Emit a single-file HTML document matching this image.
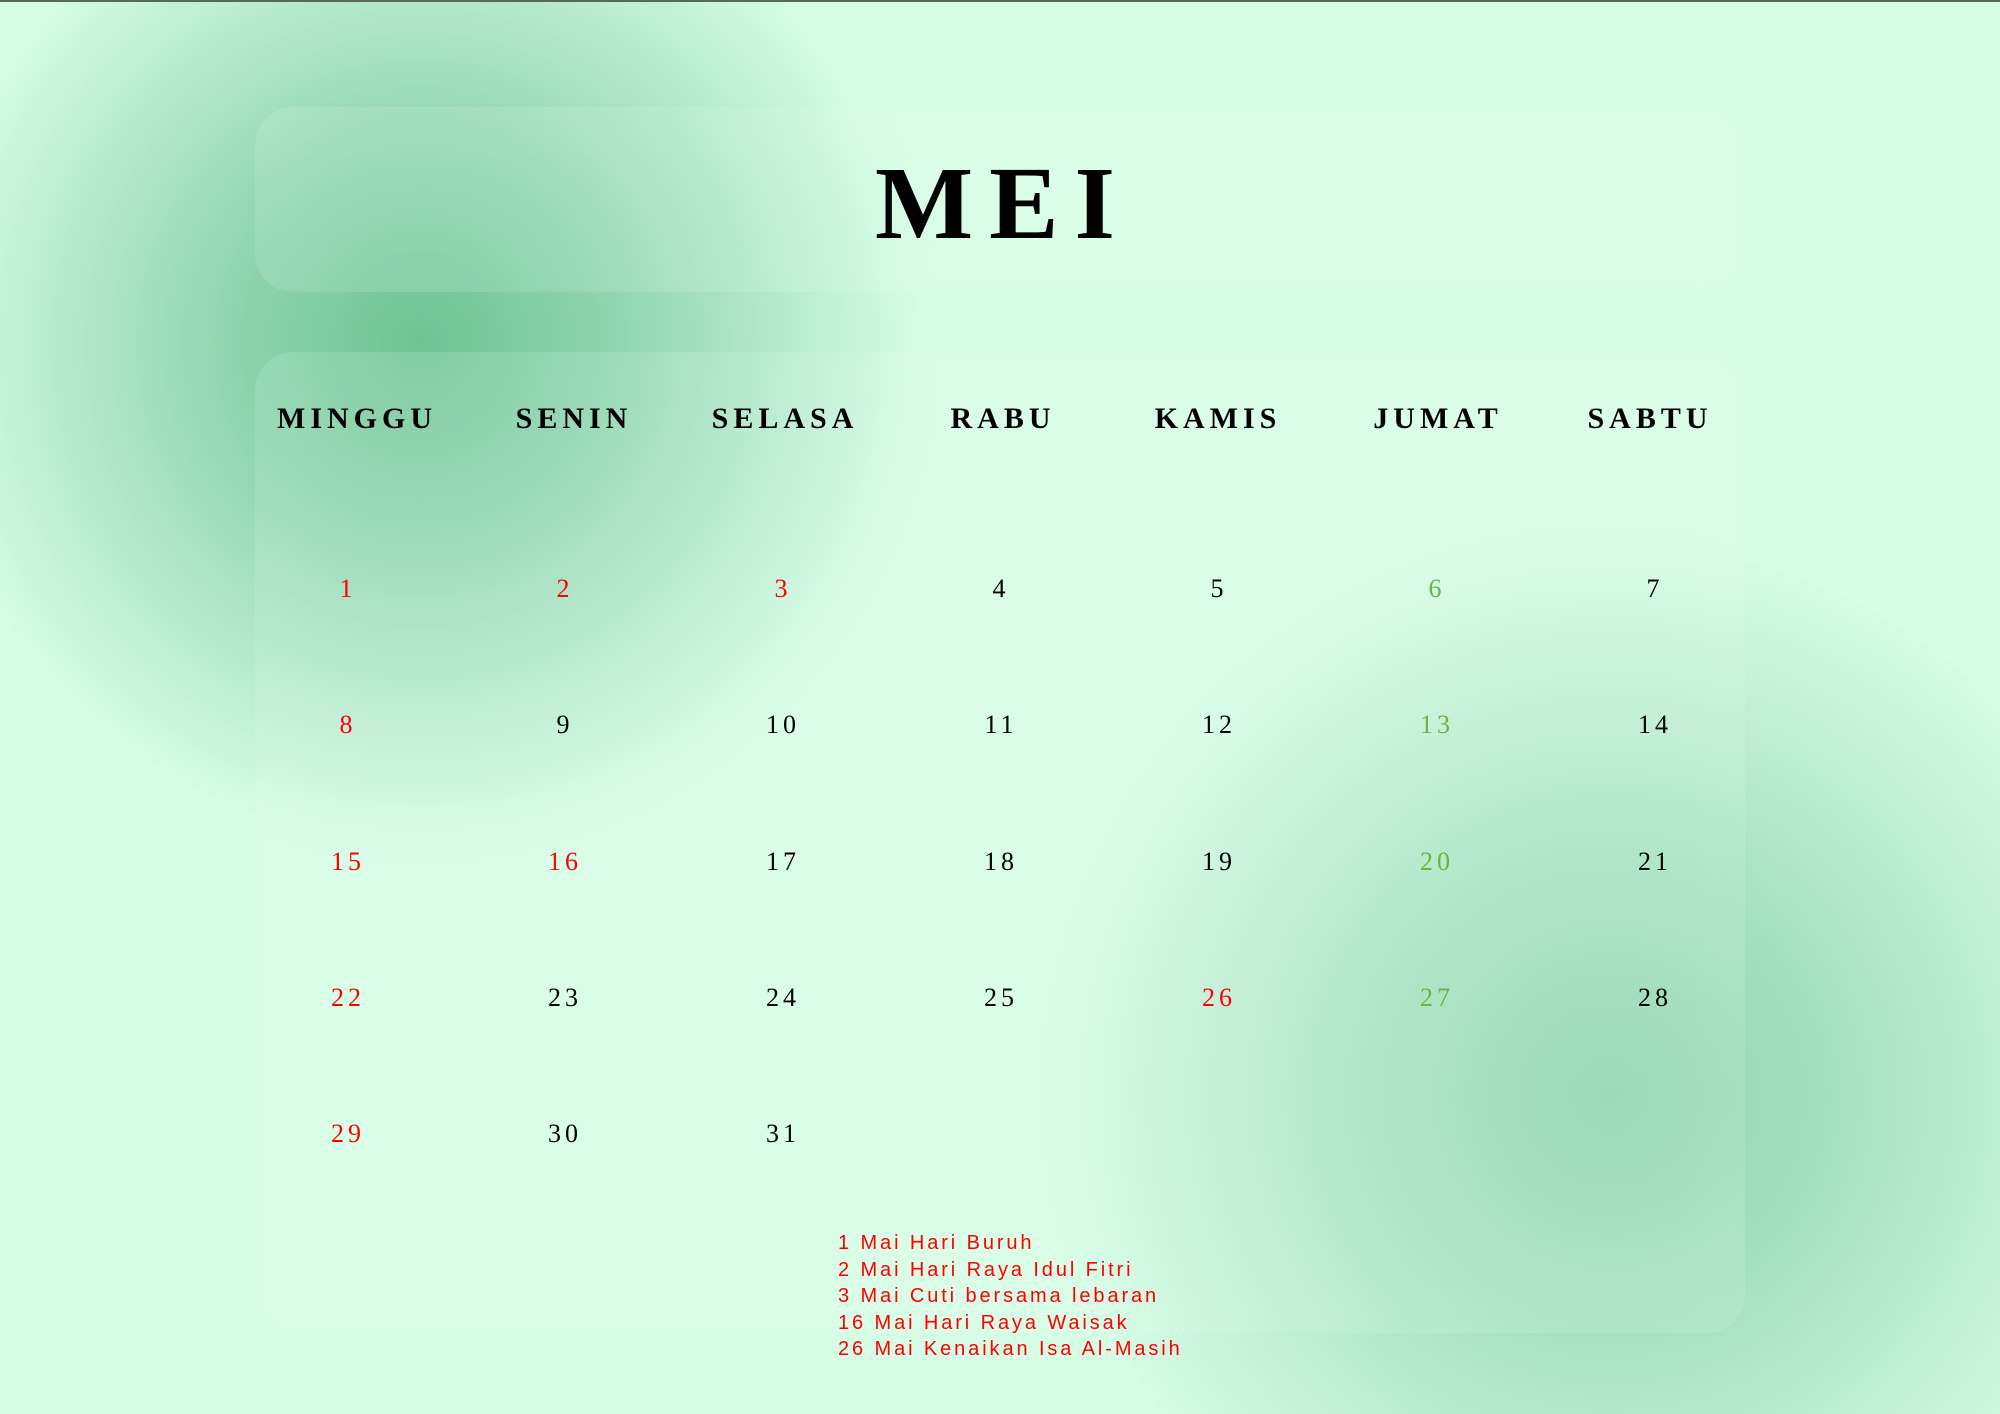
<!DOCTYPE html>
<html><head><meta charset="utf-8"><style>
html,body{margin:0;padding:0;width:2000px;height:1414px;overflow:hidden}
#w{width:2000px;height:1414px;position:relative;overflow:hidden;background:#d6fde6;font-family:"Liberation Serif",serif}
.topline{position:absolute;left:0;top:0;width:2000px;height:2px;background:#556b55}
.blob{position:absolute;border-radius:50%}
.b1{left:-79px;top:-156px;width:1000px;height:1000px;background:radial-gradient(circle at center,#6ec394 0%,#8cd3ac 25%,#b5e9cc 50%,#d6fde6 71%)}
.b2{left:1060px;top:545px;width:1100px;height:1100px;background:radial-gradient(circle at center,#8ed3ad 0%,#a6e1c1 30%,#c4f1d8 55%,#d6fde6 72%)}
.panel{position:absolute;background:rgba(235,255,243,0.15);border-radius:38px;backdrop-filter:blur(20px)}
.p1{left:255px;top:107px;width:1490px;height:185px}
.p2{left:255px;top:352px;width:1490px;height:981px}
.mei{position:absolute;left:0;width:2006px;top:152px;text-align:center;font-size:104px;font-weight:bold;letter-spacing:16px;color:#000;line-height:1}
.hd{position:absolute;top:404px;font-size:30px;font-weight:bold;letter-spacing:5px;transform:translateX(-50%);white-space:nowrap;line-height:1}
.n{position:absolute;font-size:26px;letter-spacing:4px;transform:translateX(-50%);line-height:1;color:#000}
.r{color:#f00}.g{color:#6ab53a}
.list{position:absolute;left:838px;top:1230px;font-family:"Liberation Sans",sans-serif;font-size:20px;letter-spacing:2.9px;line-height:26.5px;color:#f00}
</style></head><body><div id="w">
<div class="blob b1"></div>
<div class="blob b2"></div>
<div class="panel p1"></div>
<div class="panel p2"></div>
<div class="topline"></div>
<div class="mei">MEI</div>
<div class="hd" style="left:357px">MINGGU</div>
<div class="hd" style="left:574px">SENIN</div>
<div class="hd" style="left:785px">SELASA</div>
<div class="hd" style="left:1003px">RABU</div>
<div class="hd" style="left:1218px">KAMIS</div>
<div class="hd" style="left:1438px">JUMAT</div>
<div class="hd" style="left:1650px">SABTU</div>

<div class="n r" style="left:348px;top:576px">1</div>
<div class="n r" style="left:565px;top:576px">2</div>
<div class="n r" style="left:783px;top:576px">3</div>
<div class="n" style="left:1001px;top:576px">4</div>
<div class="n" style="left:1219px;top:576px">5</div>
<div class="n g" style="left:1437px;top:576px">6</div>
<div class="n" style="left:1655px;top:576px">7</div>

<div class="n r" style="left:348px;top:712px">8</div>
<div class="n" style="left:565px;top:712px">9</div>
<div class="n" style="left:783px;top:712px">10</div>
<div class="n" style="left:1001px;top:712px">11</div>
<div class="n" style="left:1219px;top:712px">12</div>
<div class="n g" style="left:1437px;top:712px">13</div>
<div class="n" style="left:1655px;top:712px">14</div>

<div class="n r" style="left:348px;top:849px">15</div>
<div class="n r" style="left:565px;top:849px">16</div>
<div class="n" style="left:783px;top:849px">17</div>
<div class="n" style="left:1001px;top:849px">18</div>
<div class="n" style="left:1219px;top:849px">19</div>
<div class="n g" style="left:1437px;top:849px">20</div>
<div class="n" style="left:1655px;top:849px">21</div>

<div class="n r" style="left:348px;top:985px">22</div>
<div class="n" style="left:565px;top:985px">23</div>
<div class="n" style="left:783px;top:985px">24</div>
<div class="n" style="left:1001px;top:985px">25</div>
<div class="n r" style="left:1219px;top:985px">26</div>
<div class="n g" style="left:1437px;top:985px">27</div>
<div class="n" style="left:1655px;top:985px">28</div>

<div class="n r" style="left:348px;top:1121px">29</div>
<div class="n" style="left:565px;top:1121px">30</div>
<div class="n" style="left:783px;top:1121px">31</div>

<div class="list">1 Mai Hari Buruh<br>2 Mai Hari Raya Idul Fitri<br>3 Mai Cuti bersama lebaran<br>16 Mai Hari Raya Waisak<br>26 Mai Kenaikan Isa Al-Masih</div>
</div></body></html>
